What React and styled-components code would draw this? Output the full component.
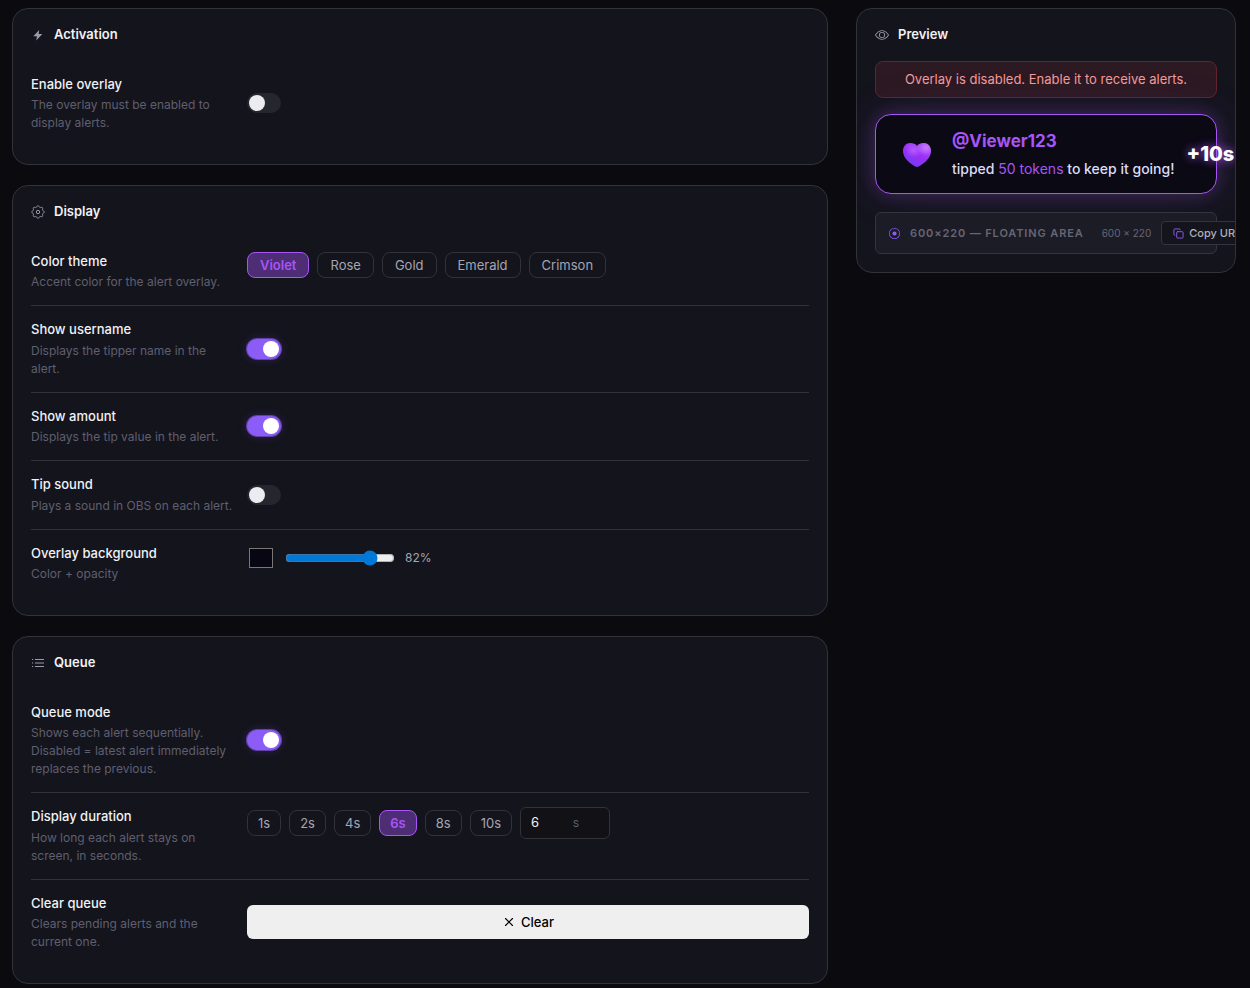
import React, { useState } from 'react';
import styled, { createGlobalStyle, css } from 'styled-components';
import { BsEye, BsRecordCircle } from 'react-icons/bs';
import { Copy, X } from 'lucide-react';

const GlobalStyle = createGlobalStyle`
  *, *::before, *::after { box-sizing: border-box; }
  body {
    margin: 0;
    background: #0b0b0f;
    color: #f1f1f5;
    font: 400 13px/1.5 Inter, "Liberation Sans", sans-serif;
  }
  button, input { font: inherit; }
  h2, h3, p { margin: 0; }
`;

const Page = styled.main`
  display: grid;
  grid-template-columns: minmax(0, 1fr) 380px;
  align-items: start;
  gap: 28px;
  padding: 8px 14px 4px 12px;
`;

const Column = styled.div`
  display: flex;
  flex-direction: column;
  gap: 20px;
`;

const Card = styled.section`
  overflow: hidden;
  padding: 16px 18px 18px;
  border: 1px solid #32323b;
  border-radius: 16px;
  background: #14141d;
`;

const CardTitle = styled.h2`
  display: flex;
  align-items: center;
  gap: 9px;
  margin-bottom: 16px;
  font-size: 13px;
  font-weight: 600;

  svg { color: #9a9aa8; }
`;

const Row = styled.div`
  display: grid;
  grid-template-columns: 202px minmax(0, 1fr);
  align-items: ${(p) => (p.$top ? 'start' : 'center')};
  gap: 14px;
  padding: 14px 0;

  & + & { border-top: 1px solid #32323b; }
`;

const RowLabel = styled.label`
  display: block;
  font-weight: 500;
`;

const Hint = styled.p`
  margin-top: 2px;
  color: #5f5f6e;
  font-size: 12px;
`;

const Switch = styled.input.attrs({ type: 'checkbox', role: 'switch' })`
  appearance: none;
  display: flex;
  align-items: center;
  width: 34px;
  height: 20px;
  margin: 0;
  padding: 0 2px;
  border-radius: 10px;
  background: #26262f;
  cursor: pointer;

  &::before {
    content: "";
    width: 16px;
    height: 16px;
    border-radius: 50%;
    background: #ebebf0;
  }

  &:checked {
    justify-content: flex-end;
    background: #8b5cf6;
    box-shadow: 0 0 0 1px rgba(139, 92, 246, 0.6), 0 0 10px rgba(139, 92, 246, 0.25);
  }

  &:checked::before { background: #fff; }
`;

const Controls = styled.div`
  display: flex;
  flex-wrap: wrap;
  align-items: center;
  gap: 8px;
`;

const Chip = styled.button`
  padding: ${(p) => (p.$compact ? '3px 10px' : '3px 12px')};
  border: 1px solid #32323b;
  border-radius: 8px;
  background: transparent;
  color: #a5a5b2;
  line-height: 18px;
  cursor: pointer;

  ${(p) => p.$active && css`
    border-color: #a855f7;
    background: #4d2d73;
    color: #a855f7;
    font-weight: 600;
  `}
`;

const SecondsBox = styled.div`
  display: flex;
  align-items: center;
  width: 90px;
  height: 32px;
  padding: 0 30px 0 10px;
  border: 1px solid #32323b;
  border-radius: 6px;
  background: #111116;
  color: #5f5f6e;
  font-size: 12px;
`;

const SecondsInput = styled.input`
  flex: 1;
  min-width: 0;
  padding: 0;
  border: 0;
  outline: 0;
  background: none;
  color: #f1f1f5;
  font-size: 13px;
  appearance: textfield;

  &::-webkit-inner-spin-button { display: none; }
`;

const ColorInput = styled.input.attrs({ type: 'color' })`
  width: 28px;
  height: 28px;
  padding: 0;
  border: 0;
  background: none;
`;

const Range = styled.input.attrs({ type: 'range' })`
  width: 110px;
  margin: 2px;
  accent-color: #0078d7;
`;

const RangeValue = styled.output`
  color: #a5a5b2;
  font-size: 12px;
`;

const ClearButton = styled.button`
  display: flex;
  align-items: center;
  justify-content: center;
  gap: 5px;
  width: 100%;
  height: 34px;
  border: 0;
  border-radius: 6px;
  background: #efefef;
  color: #000;
  font-weight: 500;
  cursor: pointer;
`;

const Notice = styled.p`
  margin-bottom: 16px;
  padding: 8px 12px;
  border: 1px solid #63242c;
  border-radius: 8px;
  background: #2c1922;
  color: #f19a9a;
  text-align: center;
`;

const Tip = styled.div`
  display: flex;
  align-items: center;
  gap: 12px;
  height: 80px;
  margin-bottom: 18px;
  padding: 0 26px;
  border: 1px solid #a855f7;
  border-radius: 16px;
  background: #0b0913;
  box-shadow: 0 0 18px rgba(168, 85, 247, 0.28), 0 0 50px rgba(168, 85, 247, 0.1);
  white-space: nowrap;

  svg { flex: none; }
`;

const TipBody = styled.div`
  flex: none;
  padding: 4px 0 0 8px;
`;

const TipUser = styled.h3`
  color: #a855f7;
  font-size: 17px;
  font-weight: 700;
  line-height: 26px;
`;

const TipText = styled.p`
  color: #dcdcf5;
  font-size: 14px;
  font-weight: 500;
  line-height: 30px;
`;

const Tokens = styled.span`
  color: #a855f7;
  font-weight: 400;
`;

const TipTime = styled.strong`
  font-size: 20px;
  font-weight: 800;
  color: #fff;
  text-shadow: 0 0 10px #a855f7;
`;

const SourceBar = styled.div`
  display: flex;
  align-items: center;
  gap: 10px;
  height: 42px;
  padding: 0 13px;
  border: 1px solid #34343e;
  border-radius: 6px;
  background: #1c1c26;
  color: #666674;
  white-space: nowrap;

  > * { flex: none; }
  > svg { color: #8b5cf6; }
`;

const SourceName = styled.span`
  margin-right: 8px;
  font-size: 11px;
  font-weight: 600;
  letter-spacing: 0.08em;
`;

const SourceSize = styled.span`
  font-size: 10px;
`;

const CopyButton = styled.button`
  display: flex;
  align-items: center;
  gap: 5px;
  height: 24px;
  padding: 0 11px;
  border: 1px solid #34343e;
  border-radius: 4px;
  background: #14141d;
  color: #b0b0bc;
  font-size: 11px;
  font-weight: 500;
  cursor: pointer;

  svg { color: #8b5cf6; }
`;

function BoltIcon() {
  return (
    <svg width="14" height="14" viewBox="0 0 14 14" fill="currentColor" aria-hidden="true">
      <path d="M8.200 2L2.300 8.300H5.900L5.300 12.600L11.300 6H7.700Z" />
    </svg>
  );
}

const gearOutline = Array.from({ length: 96 }, (_, i) => {
  const angle = (i / 96) * Math.PI * 2;
  const radius = 5.6 + 0.7 * Math.cos(8 * angle);
  return `${(7 + radius * Math.sin(angle)).toFixed(2)},${(7 - radius * Math.cos(angle)).toFixed(2)}`;
}).join(' ');

function GearIcon() {
  return (
    <svg width="14" height="14" viewBox="0 0 14 14" fill="none" stroke="currentColor" aria-hidden="true">
      <polygon points={gearOutline} />
      <circle cx="7" cy="7" r="1.700" />
    </svg>
  );
}

function ListIcon() {
  return (
    <svg width="14" height="14" viewBox="0 0 14 14" stroke="currentColor" aria-hidden="true">
      <path d="M1 3.500h1.200M4 3.500h9M1 7h1.200M4 7h9M1 10.500h1.200M4 10.500h9" />
    </svg>
  );
}

function Heart() {
  return (
    <svg width="30" height="30" viewBox="0 -1 30 30" aria-hidden="true">
      <defs>
        <linearGradient id="heartBase" x1="0.2" y1="1" x2="0.8" y2="0">
          <stop offset="0" stopColor="#6a3df5" />
          <stop offset="0.5" stopColor="#9a2ff5" />
          <stop offset="1" stopColor="#b04ff8" />
        </linearGradient>
        <radialGradient id="heartShine" cx="0.82" cy="0.2" r="0.32">
          <stop offset="0" stopColor="#c47aff" />
          <stop offset="1" stopColor="#c47aff" stopOpacity="0" />
        </radialGradient>
        <radialGradient id="heartLobe" cx="0.38" cy="0.3" r="0.3">
          <stop offset="0" stopColor="#b05cff" />
          <stop offset="1" stopColor="#b05cff" stopOpacity="0" />
        </radialGradient>
      </defs>
      {['heartBase', 'heartLobe', 'heartShine'].map((id) => (
        <path
          key={id}
          fill={`url(#${id})`}
          d="M15 6C13.400 3.800 11 3 8.500 3C4 3 1 6.500 1 11C1 18 8 23.500 13.300 26.600C14.400 27.200 15.600 27.200 16.700 26.600C22 23.500 29 18 29 11C29 6.500 26 3 21.500 3C19 3 16.600 3.800 15 6Z"
        />
      ))}
    </svg>
  );
}

function Field({ id, label, hint, top, children }) {
  return (
    <Row $top={top}>
      <div>
        <RowLabel htmlFor={id} id={`${id}-label`}>{label}</RowLabel>
        <Hint>{hint}</Hint>
      </div>
      {children}
    </Row>
  );
}

function Toggle({ id, on }) {
  const [checked, setChecked] = useState(on);
  return <Switch id={id} checked={checked} onChange={(e) => setChecked(e.target.checked)} />;
}

const themes = ['Violet', 'Rose', 'Gold', 'Emerald', 'Crimson'];
const durations = [1, 2, 4, 6, 8, 10];

export default function App() {
  const [theme, setTheme] = useState('Violet');
  const [seconds, setSeconds] = useState(6);
  const [color, setColor] = useState('#080612');
  const [opacity, setOpacity] = useState(82);

  return (
    <>
      <GlobalStyle />
      <Page>
        <Column>
          <Card>
            <CardTitle><BoltIcon />Activation</CardTitle>
            <Field id="enable" label="Enable overlay" hint="The overlay must be enabled to display alerts.">
              <Toggle id="enable" on={false} />
            </Field>
          </Card>

          <Card>
            <CardTitle><GearIcon />Display</CardTitle>
            <Field id="theme" label="Color theme" hint="Accent color for the alert overlay." top>
              <Controls role="group" aria-labelledby="theme-label">
                {themes.map((name, i) => (
                  <Chip
                    key={name}
                    id={i === 0 ? 'theme' : undefined}
                    type="button"
                    $active={name === theme}
                    aria-pressed={name === theme}
                    onClick={() => setTheme(name)}
                  >
                    {name}
                  </Chip>
                ))}
              </Controls>
            </Field>
            <Field id="username" label="Show username" hint="Displays the tipper name in the alert.">
              <Toggle id="username" on />
            </Field>
            <Field id="amount" label="Show amount" hint="Displays the tip value in the alert.">
              <Toggle id="amount" on />
            </Field>
            <Field id="sound" label="Tip sound" hint="Plays a sound in OBS on each alert.">
              <Toggle id="sound" on={false} />
            </Field>
            <Field id="background" label="Overlay background" hint="Color + opacity" top>
              <Controls>
                <ColorInput id="background" value={color} onChange={(e) => setColor(e.target.value)} />
                <Range
                  aria-label="Opacity"
                  min="0"
                  max="100"
                  value={opacity}
                  onChange={(e) => setOpacity(e.target.value)}
                />
                <RangeValue>{opacity}%</RangeValue>
              </Controls>
            </Field>
          </Card>

          <Card>
            <CardTitle><ListIcon />Queue</CardTitle>
            <Field
              id="queue"
              label="Queue mode"
              hint="Shows each alert sequentially. Disabled = latest alert immediately replaces the previous."
            >
              <Toggle id="queue" on />
            </Field>
            <Field id="duration" label="Display duration" hint="How long each alert stays on screen, in seconds." top>
              <Controls>
                {durations.map((n) => (
                  <Chip
                    key={n}
                    type="button"
                    $compact
                    $active={n === Number(seconds)}
                    aria-pressed={n === Number(seconds)}
                    onClick={() => setSeconds(n)}
                  >
                    {n}s
                  </Chip>
                ))}
                <SecondsBox>
                  <SecondsInput
                    id="duration"
                    type="number"
                    min="1"
                    value={seconds}
                    onChange={(e) => setSeconds(e.target.value)}
                  />
                  <span>s</span>
                </SecondsBox>
              </Controls>
            </Field>
            <Field id="clear" label="Clear queue" hint="Clears pending alerts and the current one.">
              <ClearButton id="clear" type="button"><X size={14} />Clear</ClearButton>
            </Field>
          </Card>
        </Column>

        <Card>
          <CardTitle><BsEye size={14} />Preview</CardTitle>
          <Notice role="status">Overlay is disabled. Enable it to receive alerts.</Notice>
          <Tip>
            <Heart />
            <TipBody>
              <TipUser>@Viewer123</TipUser>
              <TipText>tipped <Tokens>50 tokens</Tokens> to keep it going!</TipText>
            </TipBody>
            <TipTime>+10s</TipTime>
          </Tip>
          <SourceBar>
            <BsRecordCircle size={11} />
            <SourceName>600×220 — FLOATING AREA</SourceName>
            <SourceSize>600 × 220</SourceSize>
            <CopyButton type="button"><Copy size={11} />Copy URL</CopyButton>
          </SourceBar>
        </Card>
      </Page>
    </>
  );
}
